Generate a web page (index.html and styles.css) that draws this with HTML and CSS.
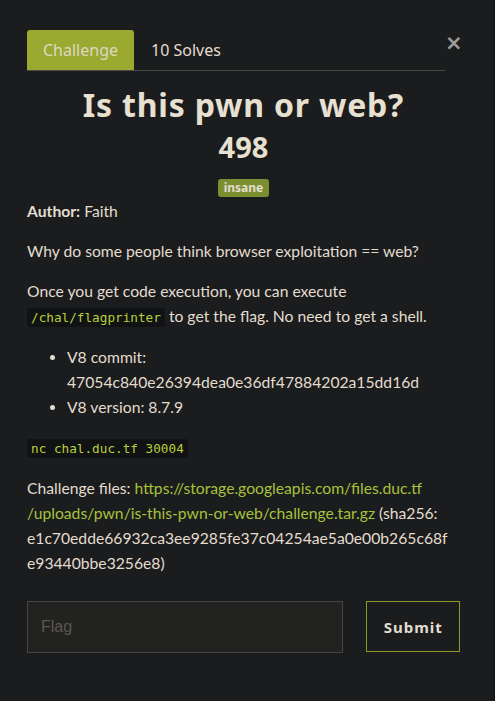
FILE: index.html
```html
<!DOCTYPE html>
<html>
<head>
<meta charset="utf-8">
<link rel="stylesheet" href="styles.css">
</head>
<body>
<div class="page">
  <div class="modal">
    <button class="close">&times;</button>
    <div class="tabs">
      <div class="tab active">Challenge</div>
      <div class="tab">10 Solves</div>
    </div>
    <h1 class="title">Is this pwn or web?</h1>
    <div class="points">498</div>
    <div class="tags"><span class="badge">insane</span></div>
    <div class="desc">
      <p><b>Author:</b> Faith</p>
      <p>Why do some people think browser exploitation == web?</p>
      <p>Once you get code execution, you can execute <code class="inline">/chal/flagprinter</code> to get the flag. No need to get a shell.</p>
      <ul>
        <li>V8 commit: 47054c840e26394dea0e36df47884202a15dd16d</li>
        <li>V8 version: 8.7.9</li>
      </ul>
      <p><code class="inline">nc chal.duc.tf 30004</code></p>
      <p class="files">Challenge files: <a href="#">https://storage.googleapis.com/files.duc.tf<br>/uploads/pwn/is-this-pwn-or-web/challenge.tar.gz</a> (sha256: e1c70edde66932ca3ee9285fe37c04254ae5a0e00b265c68fe93440bbe3256e8)</p>
    </div>
    <form class="submit-row">
      <input class="flag" type="text" placeholder="Flag">
      <button class="submit" type="button">Submit</button>
    </form>
  </div>
  <div class="edge"></div>
</div>
</body>
</html>
```
FILE: styles.css
```css
html, body {
  margin: 0;
  padding: 0;
  background: #1b1c1e;
}
.page {
  display: flex;
  height: 701px;
}
.modal {
  width: 493px;
  box-sizing: border-box;
  padding: 30px 33px 0 27px;
  position: relative;
  color: #e3ddcf;
  font-family: "Lato", sans-serif;
}
.edge {
  width: 2px;
  background: #151617;
}
.close {
  position: absolute;
  top: 32px;
  left: 445px;
  background: none;
  border: none;
  color: #9d9d9b;
  font-size: 21px;
  font-weight: bold;
  font-family: "DejaVu Sans", sans-serif;
  padding: 0;
  line-height: 22px;
}
.tabs {
  display: flex;
  border-bottom: 1px solid #4a4a48;
  height: 40px;
  margin-right: 15px;
}
.tab {
  font-family: "Noto Sans", sans-serif;
  font-size: 16px;
  padding: 0 17px;
  line-height: 40px;
  color: #e3ddcf;
}
.tab.active {
  background: #9aa92f;
  border-radius: 3px 3px 0 0;
  color: #dcd8c4;
  padding: 0 16px;
}
.title {
  font-family: "Noto Sans", sans-serif;
  font-weight: bold;
  font-size: 32px;
  letter-spacing: 0.8px;
  text-align: center;
  margin: 12px 0 0;
  line-height: 44px;
  color: #e8e0d0;
}
.points {
  font-family: "Noto Sans", sans-serif;
  font-weight: bold;
  font-size: 29px;
  text-align: center;
  line-height: 40px;
  color: #e8e0d0;
}
.tags {
  text-align: center;
  margin-top: 10px;
  line-height: 18px;
  height: 18px;
}
.badge {
  display: inline-block;
  background: #7b8f31;
  color: #e3ddcf;
  font-family: "Noto Sans", sans-serif;
  font-weight: bold;
  font-size: 12px;
  line-height: 18px;
  padding: 0 6px;
  border-radius: 3px;
}
.desc {
  font-size: 15.7px;
  line-height: 25px;
  margin-top: 4px;
  margin-right: 12px;
}
.desc p {
  margin: 0 0 15px;
}
.desc b {
  font-weight: bold;
}
.desc ul {
  margin: 0 0 15px;
  padding-left: 40px;
}
.files {
  overflow-wrap: anywhere;
}
.inline {
  font-family: "DejaVu Sans Mono", monospace;
  font-size: 12.7px;
  background: #111213;
  color: #b9cf3c;
  padding: 2px 4px;
  border-radius: 3px;
}
.desc a {
  color: #a8c23a;
  text-decoration: none;
}
.submit-row {
  display: flex;
  gap: 23px;
  margin-top: 25px;
  align-items: flex-start;
}
.flag {
  width: 318px;
  height: 52px;
  box-sizing: border-box;
  background: #222220;
  border: 1px solid #454543;
  padding: 0 13px;
  font-family: "Liberation Sans", sans-serif;
  font-size: 16px;
  color: #e3ddcf;
  outline: none;
}
.flag::placeholder {
  color: #5b5850;
}
.submit {
  width: 94px;
  height: 51px;
  background: transparent;
  border: 1px solid #8a9a2a;
  color: #e3ddcf;
  font-family: "Noto Sans", sans-serif;
  font-weight: bold;
  font-size: 15px;
  letter-spacing: 1px;
}
```
